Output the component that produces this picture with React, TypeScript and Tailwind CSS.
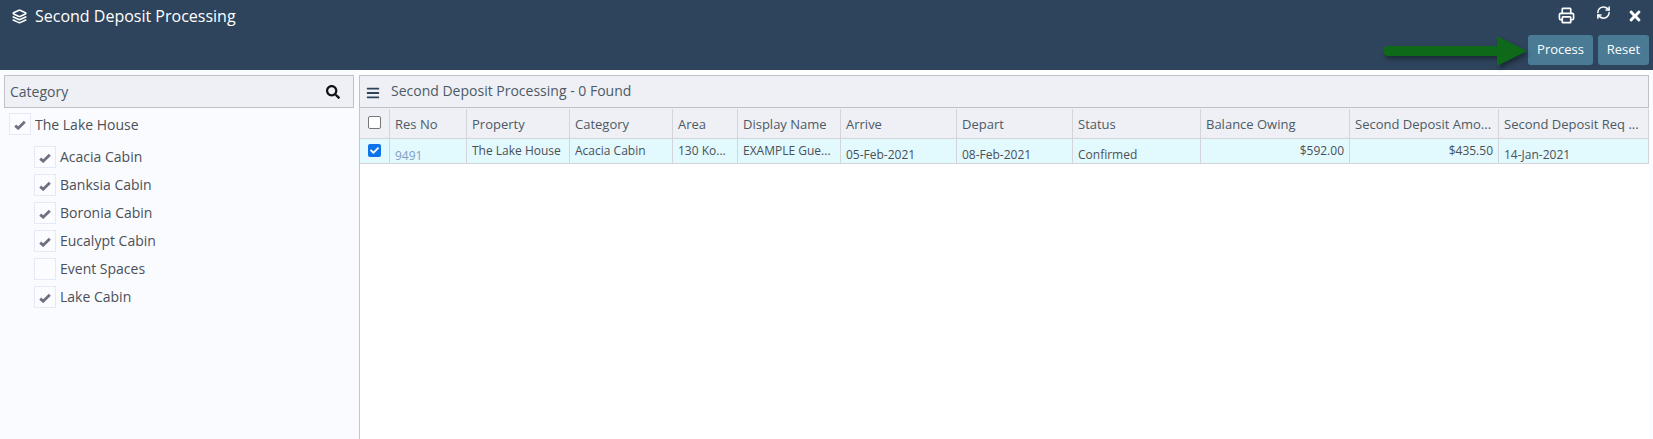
import { FaSearch, FaCheck, FaTimes, FaBars } from 'react-icons/fa';
import { LuLayers, LuPrinter, LuRefreshCw } from 'react-icons/lu';

const categories = [
  { name: 'Acacia Cabin', checked: true },
  { name: 'Banksia Cabin', checked: true },
  { name: 'Boronia Cabin', checked: true },
  { name: 'Eucalypt Cabin', checked: true },
  { name: 'Event Spaces', checked: false },
  { name: 'Lake Cabin', checked: true },
];

const columns = [
  { label: 'Res No', width: 'w-[77px]', value: '9491', className: 'text-[#7f9fc4] pt-[9px]' },
  { label: 'Property', width: 'w-[103px]', value: 'The Lake House', className: '' },
  { label: 'Category', width: 'w-[103px]', value: 'Acacia Cabin', className: '' },
  { label: 'Area', width: 'w-[65px]', value: '130 Ko...', className: '' },
  { label: 'Display Name', width: 'w-[103px]', value: 'EXAMPLE Gue...', className: '' },
  { label: 'Arrive', width: 'w-[116px]', value: '05-Feb-2021', className: 'pt-[7px]' },
  { label: 'Depart', width: 'w-[116px]', value: '08-Feb-2021', className: 'pt-[7px]' },
  { label: 'Status', width: 'w-[128px]', value: 'Confirmed', className: 'pt-[7px]' },
  { label: 'Balance Owing', width: 'w-[149px]', value: '$592.00', className: 'justify-end' },
  { label: 'Second Deposit Amo...', width: 'w-[149px]', value: '$435.50', className: 'justify-end' },
  { label: 'Second Deposit Req ...', width: 'w-[150px]', value: '14-Jan-2021', className: 'pt-[7px]' },
];

function TreeCheck({ checked }: { checked: boolean }) {
  return (
    <span className="flex size-[22px] shrink-0 items-center justify-center border border-[#e6e9f5] bg-[#fbfcff]">
      {checked && (
        <svg viewBox="0 0 12 10" className="mt-px h-[10px] w-[12px]">
          <path d="M1.2 5.6 4.2 8.2 10.8 1.8" fill="none" stroke="#6f6f80" strokeWidth="2.8" />
        </svg>
      )}
    </span>
  );
}

export default function App() {
  return (
    <div className="h-[439px] w-[1653px] overflow-hidden bg-white font-['Open_Sans',sans-serif] text-[#4a5058]">
      <header className="relative h-[70px] bg-[#2e445c] text-white">
        <div className="flex h-[35px] items-center justify-between">
          <div className="flex items-center pb-[3px] pl-3">
            <LuLayers className="size-[15px]" strokeWidth={2.6} />
            <span className="ml-2 text-base">Second Deposit Processing</span>
          </div>
          <div className="flex items-center pr-[10px]">
            <LuPrinter className="mb-[5px] size-[17px]" strokeWidth={2.4} />
            <LuRefreshCw className="ml-[21px] mb-[10px] size-[15px]" strokeWidth={2.4} />
            <FaTimes className="ml-[16px] mb-[4px] size-[16px]" />
          </div>
        </div>
        <div className="flex justify-end gap-[5px] pr-1">
          <button className="h-[30px] w-[65px] rounded-[3px] bg-[#4a7a94] text-[13px] text-white">Process</button>
          <button className="h-[30px] w-[51px] rounded-[3px] bg-[#4a7a94] text-[13px] text-white">Reset</button>
        </div>
        <svg className="absolute left-[1380px] top-[34px] h-[34px] w-[148px] drop-shadow-[2px_3px_2px_rgba(0,0,0,0.4)]" viewBox="0 0 148 34">
          <path d="M8 12h109V2l30 15-30 15V22H8a5 5 0 0 1 0-10z" fill="#0e6a18" />
        </svg>
      </header>

      <div className="flex h-[369px] bg-[#fafbfe]">
        <aside className="w-[359px] shrink-0 pl-1 pt-[5px] pr-[5px]">
          <div className="flex h-[33px] items-center justify-between border border-[#bfc1c6] bg-[#eef0f5] pl-[5px] pr-[13px] text-sm text-[#4d5a66]">
            <span>Category</span>
            <FaSearch className="size-[14px] text-[#10131a]" />
          </div>
          <div className="mt-[5px] flex items-center gap-1 pl-[5px] text-sm">
            <TreeCheck checked />
            <span className="pt-px">The Lake House</span>
          </div>
          <ul className="mt-[11px] flex flex-col gap-[6px] pl-[30px] text-sm">
            {categories.map((category) => (
              <li key={category.name} className="flex items-center gap-1">
                <TreeCheck checked={category.checked} />
                <span>{category.name}</span>
              </li>
            ))}
          </ul>
        </aside>

        <main className="h-full w-[1290px] bg-white pt-[5px]">
          <div className="h-full border-l border-[#c4c6ca]">
            <div className="-ml-px flex h-[33px] items-center border border-[#bfc1c6] bg-[#eef0f5] pb-[2px] pl-[6px] text-sm text-[#4d5a66]">
              <FaBars className="mt-[5px] size-[14px] text-[#2e445c]" />
              <span className="ml-[11px]">Second Deposit Processing - 0 Found</span>
            </div>
            <div className="flex h-[31px] border-b border-[#d3d5da] bg-[#eef0f5] pt-px text-[13px] text-[#4d5a66]">
              <div className="flex w-[30px] items-center justify-center border-r border-[#d3d5da] pb-[2px]">
                <span className="size-[13px] rounded-[2px] border border-[#767676] bg-white" />
              </div>
              {columns.map((column) => (
                <div key={column.label} className={`${column.width} flex items-center overflow-hidden whitespace-nowrap border-r border-[#d3d5da] px-[5px] pt-[2px]`}>
                  {column.label}
                </div>
              ))}
            </div>
            <div className="flex h-[25px] border-b border-[#d3d5da] bg-[#e2f9fe] text-xs text-[#4a5058]">
              <div className="flex w-[30px] items-center justify-center border-r border-[#d3d5da] pb-px">
                <span className="flex size-[13px] items-center justify-center rounded-[2px] bg-[#0b74ea]">
                  <FaCheck className="size-[9px] text-white" />
                </span>
              </div>
              {columns.map((column) => (
                <div key={column.label} className={`${column.width} ${column.className} flex items-center overflow-hidden whitespace-nowrap border-r border-[#d3d5da] px-[5px]`}>
                  {column.value}
                </div>
              ))}
            </div>
          </div>
        </main>
      </div>
    </div>
  );
}
